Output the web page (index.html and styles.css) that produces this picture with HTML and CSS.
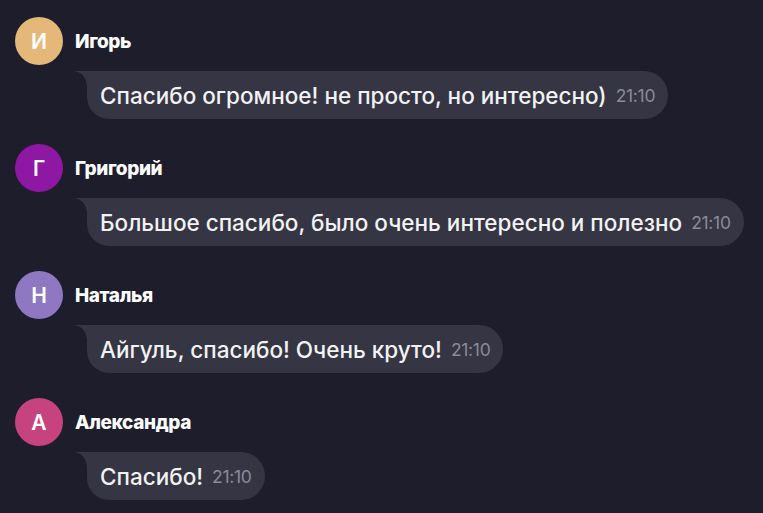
FILE: index.html
```html
<!DOCTYPE html>
<html lang="ru">
<head>
<meta charset="utf-8">
<link rel="stylesheet" href="styles.css">
</head>
<body>
<div class="chat">
  <div class="msg">
    <div class="head"><div class="avatar a1">И</div><div class="name">Игорь</div></div>
    <div class="bubble"><span class="text">Спасибо огромное! не просто, но интересно)</span><span class="time">21:10</span></div>
  </div>
  <div class="msg">
    <div class="head"><div class="avatar a2">Г</div><div class="name">Григорий</div></div>
    <div class="bubble"><span class="text">Большое спасибо, было очень интересно и полезно</span><span class="time">21:10</span></div>
  </div>
  <div class="msg">
    <div class="head"><div class="avatar a3">Н</div><div class="name">Наталья</div></div>
    <div class="bubble"><span class="text">Айгуль, спасибо! Очень круто!</span><span class="time">21:10</span></div>
  </div>
  <div class="msg">
    <div class="head"><div class="avatar a4">А</div><div class="name">Александра</div></div>
    <div class="bubble"><span class="text">Спасибо!</span><span class="time">21:10</span></div>
  </div>
</div>
</body>
</html>
```
FILE: styles.css
```css
html, body {
  margin: 0;
  padding: 0;
  background: #1e1d2b;
  height: 100%;
  overflow: hidden;
}
body {
  font-family: Inter, Roboto, "Liberation Sans", sans-serif;
  color: #f2f2f5;
}
.chat {
  display: flex;
  flex-direction: column;
  gap: 25px;
  padding: 17px 0 0 15px;
}
.msg {
  display: flex;
  flex-direction: column;
  align-items: flex-start;
  gap: 6px;
}
.head {
  display: flex;
  align-items: center;
  gap: 12px;
}
.avatar {
  width: 48px;
  height: 48px;
  border-radius: 50%;
  display: flex;
  align-items: center;
  justify-content: center;
  font-size: 21px;
  font-weight: 600;
  color: #ffffff;
}
.a1 { background: #e3b878; }
.a2 { background: #8e18a4; }
.a3 { background: #8e78c2; }
.a4 { background: #c6437f; }
.name {
  font-size: 19px;
  font-weight: 800;
  color: #ffffff;
  letter-spacing: -0.4px;
}
.bubble {
  position: relative;
  margin-left: 72px;
  height: 48px;
  box-sizing: border-box;
  padding: 0 13px;
  display: flex;
  align-items: center;
  gap: 9px;
  background: #353543;
  border-radius: 0 24px 24px 22px;
}
.bubble::before {
  content: "";
  position: absolute;
  left: -13px;
  top: 0;
  width: 13px;
  height: 15px;
  background: radial-gradient(13px 15px at 0 100%, transparent 96%, #353543 100%);
}
.text {
  font-size: 22.5px;
  font-weight: 500;
  color: #f2f2f5;
}
.time {
  font-size: 17.5px;
  color: #8b8a98;
  letter-spacing: -0.3px;
}
```
